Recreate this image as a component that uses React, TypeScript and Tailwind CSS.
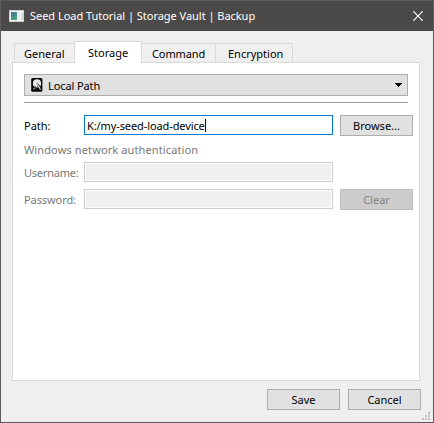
import type { ReactNode } from "react";

const tabs = [
  { name: "General", box: "w-[60px] h-[19px] border-r-0 pl-[9px] pt-px", text: "tracking-[0px]" },
  { name: "Storage", box: "w-[68px] h-[22px] -mb-px bg-white z-10 pl-[13px]", text: "tracking-[0px]" },
  { name: "Command", box: "w-[74px] h-[19px] border-l-0 pl-[10px] pt-px", text: "tracking-[-0.1px]" },
  { name: "Encryption", box: "w-[77px] h-[19px] border-l-0 pl-[12px] pt-px", text: "tracking-[0px]" },
];

function Button({ children, disabled = false }: { children: ReactNode; disabled?: boolean }) {
  return (
    <button
      disabled={disabled}
      className={`flex h-[21px] w-[73px] shrink-0 items-center justify-center border ${
        disabled ? "border-[#bfbfbf] bg-[#cccccc] text-[#838383]" : "border-[#adadad] bg-[#e1e1e1] text-black"
      }`}
    >
      {children}
    </button>
  );
}

function AppIcon() {
  return (
    <svg width="16" height="13" viewBox="0 0 16 13" shapeRendering="crispEdges">
      <defs>
        <linearGradient id="screen" x1="0" y1="0" x2="0.6" y2="1">
          <stop offset="0" stopColor="#456f9d" />
          <stop offset="1" stopColor="#49a776" />
        </linearGradient>
      </defs>
      <rect width="15" height="12" fill="#c9ced2" />
      <rect x="1" y="1" width="13" height="10" fill="#f5f6f7" />
      <rect x="2" y="2" width="6" height="8" fill="url(#screen)" />
      <rect x="9" y="2" width="2" height="8" fill="#e6eaed" />
      <rect x="12" y="3" width="2" height="7" fill="#d4dad9" />
    </svg>
  );
}

function DriveIcon() {
  return (
    <svg width="12" height="14" viewBox="0 0 12 14">
      <rect x="0.2" y="0" width="11.2" height="13.8" rx="1.5" fill="#080808" />
      <circle cx="6" cy="5.4" r="4.1" fill="#e8e8e8" />
      <circle cx="6.2" cy="5.2" r="0.8" fill="#777" />
      <path d="M1.5 8.6h3.5v3.6H1.500z" fill="#080808" />
      <path d="M6.8 6.6 9.3 11" stroke="#080808" strokeWidth="2.2" />
      <path d="M6.3 6.3 9 10.600" stroke="#eee" strokeWidth="1.1" />
      <path d="M2.2 9.500h2.300v2H2.200z" fill="#777" />
      <path d="M8.600 11.200h1.600" stroke="#ccc" strokeWidth="1" />
    </svg>
  );
}

export default function App() {
  return (
    <div className="flex h-[423px] w-[434px] flex-col border border-[#5b5b5b] bg-[#efefef] font-['Noto_Sans','Open_Sans',sans-serif] text-[11px] leading-[16px] whitespace-nowrap text-black">
      <header className="flex h-[30px] shrink-0 items-center bg-[#4c4a48] pl-2 text-white">
        <AppIcon />
        <span className="ml-[5px] tracking-[-0.03px]">Seed Load Tutorial | Storage Vault | Backup</span>
        <svg className="mr-[10px] ml-auto" width="10" height="10" viewBox="0 0 10 10">
          <path d="M.3.3l9.400 9.400M9.700.3L.3 9.700" stroke="white" strokeWidth="1.2" />
        </svg>
      </header>

      <nav className="flex h-[31px] shrink-0 items-end pl-[13px]">
        {tabs.map((tab) => (
          <div key={tab.name} className={`relative flex items-center border border-b-0 border-[#d9d9d9] ${tab.box}`}>
            <span className={tab.text}>{tab.name}</span>
          </div>
        ))}
      </nav>

      <main className="ml-[11px] h-[319px] w-[408px] shrink-0 border border-[#d9d9d9] bg-white pt-[11px] pl-[11px]">
        <div className="flex h-[22px] w-[384px] items-center border border-[#adadad] bg-[#e1e1e1] pl-[6px]">
          <DriveIcon />
          <span className="ml-[5px] pt-[2px] tracking-[-0.1px]">Local Path</span>
          <svg className="mr-[5px] ml-auto" width="7" height="4" viewBox="0 0 7 4" shapeRendering="crispEdges">
            <path d="M0 0h7v1H6v1H5v1H4v1H3V3H2V2H1V1H0z" />
          </svg>
        </div>
        <div className="mt-[6px] h-px w-[384px] bg-[#a0a0a0]" />
        <div className="mt-[12px] flex h-[21px] items-start">
          <span className="w-[60px] pt-[3px]">Path:</span>
          <div className="mr-[7px] flex h-[20px] w-[249px] items-center border border-[#0078d7] pt-px pl-[2px]">
            <span className="tracking-[-0.1px]">K:/my-seed-load-device</span>
            <span className="mb-px h-[13px] w-px bg-black" />
          </div>
          <Button>Browse...</Button>
        </div>
        <div className="mt-[6px] h-[20px] tracking-[0.12px] text-[#787878]">Windows network authentication</div>
        <div className="flex h-[20px] text-[#787878]">
          <span className="w-[60px] pt-[3px] tracking-[-0.22px]">Username:</span>
          <div className="h-[20px] w-[249px] border border-[#cccccc] bg-white p-px"><div className="h-full bg-[#f0f0f0]" /></div>
        </div>
        <div className="mt-[7px] flex h-[21px] text-[#787878]">
          <span className="w-[60px] pt-[3px] tracking-[-0.08px]">Password:</span>
          <div className="mr-[7px] h-[20px] w-[249px] border border-[#cccccc] bg-white p-px"><div className="h-full bg-[#f0f0f0]" /></div>
          <Button disabled>Clear</Button>
        </div>
      </main>

      <footer className="relative flex grow gap-2 pt-[8px] pl-[266px]">
        <Button>Save</Button>
        <Button>Cancel</Button>
        <svg className="absolute right-[3px] bottom-[2px]" width="8" height="8" viewBox="0 0 8 8" shapeRendering="crispEdges" fill="#bfbfbf">
          <path d="M6 0h2v2H6zM3 3h2v2H3zM6 3h2v2H6zM0 6h2v2H0zM3 6h2v2H3zM6 6h2v2H6z" />
        </svg>
      </footer>
    </div>
  );
}
